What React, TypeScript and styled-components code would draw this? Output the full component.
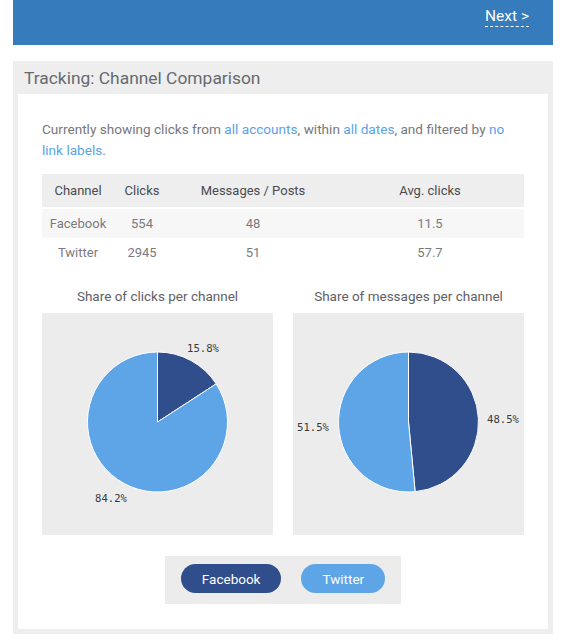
import React from "react";
import styled, { createGlobalStyle } from "styled-components";

const Global = createGlobalStyle`
  html, body { margin: 0; padding: 0; background: #ffffff; }
  body { font-family: Roboto, "Liberation Sans", sans-serif; }
`;

const Page = styled.div`
  margin: 0 12px 0 13px;
  display: flex;
  flex-direction: column;
`;

const TopBar = styled.div`
  height: 45px;
  background: #367bbb;
  display: flex;
  justify-content: flex-end;
  align-items: flex-start;
  padding: 0 24px 0 0;
  box-sizing: border-box;
`;

const NextLink = styled.a`
  margin-top: 7px;
  color: #ffffff;
  font-size: 15.5px;
  line-height: 18px;
  text-decoration: none;
  border-bottom: 1px dashed #ffffff;
  padding-bottom: 1px;
  cursor: pointer;
`;

const Panel = styled.section`
  margin-top: 16px;
  background: #eeeeee;
  padding: 0 5px 5px 5px;
  display: flex;
  flex-direction: column;
`;

const PanelTitle = styled.h2`
  margin: 0;
  height: 33px;
  display: flex;
  align-items: center;
  padding-left: 6px;
  padding-top: 1px;
  box-sizing: border-box;
  font-size: 17.4px;
  font-weight: 400;
  color: #666a70;
`;

const Card = styled.div`
  background: #ffffff;
  padding: 25px 24px 25px 24px;
  display: flex;
  flex-direction: column;
`;

const Description = styled.p`
  margin: 0;
  font-size: 13.6px;
  line-height: 21px;
  color: #77787d;
`;

const Link = styled.span`
  color: #5ba2e4;
`;

const Table = styled.div`
  margin-top: 13px;
  display: grid;
  grid-template-columns: 72px 56px 166px 1fr;
`;

const Row = styled.div<{ $head?: boolean; $shade?: boolean }>`
  display: contents;
  & > div {
    height: ${(p) => (p.$head ? "33px" : "29px")};
    background: ${(p) => (p.$head ? "#eeeeee" : p.$shade ? "#f7f7f7" : "#ffffff")};
    color: ${(p) => (p.$head ? "#4a4b50" : "#7a7b80")};
    margin-bottom: ${(p) => (p.$head ? "2px" : "0")};
  }
`;

const Cell = styled.div`
  display: flex;
  align-items: center;
  justify-content: center;
  font-size: 13px;
`;

const Charts = styled.div`
  margin-top: 21px;
  display: grid;
  grid-template-columns: 231px 231px;
  justify-content: space-between;
`;

const ChartCol = styled.div`
  display: flex;
  flex-direction: column;
  align-items: stretch;
`;

const ChartTitle = styled.div`
  text-align: center;
  font-size: 13.5px;
  line-height: 16px;
  color: #5f6066;
  margin-bottom: 9px;
`;

const ChartBox = styled.div`
  height: 222px;
  background: #ececec;
`;

const Legend = styled.div`
  margin: 21px auto 0 auto;
  background: #ececec;
  padding: 8px 16px 11px 16px;
  display: flex;
  gap: 20px;
`;

const LegendButton = styled.button<{ $color: string }>`
  height: 29px;
  border: none;
  border-radius: 15px;
  background: ${(p) => p.$color};
  color: #ffffff;
  font-family: Roboto, "Liberation Sans", sans-serif;
  font-size: 13.5px;
  padding: 0 21px;
  cursor: pointer;
`;

const DARK = "#304d8c";
const LIGHT = "#5ea5e8";

type Slice = { value: number; color: string };

function arc(cx: number, cy: number, r: number, a0: number, a1: number) {
  const p = (a: number) => [cx + r * Math.sin(a), cy - r * Math.cos(a)];
  const [x0, y0] = p(a0);
  const [x1, y1] = p(a1);
  const large = a1 - a0 > Math.PI ? 1 : 0;
  return `M${cx},${cy} L${x0},${y0} A${r},${r} 0 ${large} 1 ${x1},${y1} Z`;
}

function Pie({
  slices,
  labels,
}: {
  slices: Slice[];
  labels: { text: string; x: number; y: number }[];
}) {
  const cx = 115.5;
  const cy = 109;
  const r = 70;
  const total = slices.reduce((s, x) => s + x.value, 0);
  let a = 0;
  return (
    <svg width="231" height="222" viewBox="0 0 231 222">
      {slices.map((s, i) => {
        const a0 = a;
        a += (s.value / total) * Math.PI * 2;
        return (
          <path
            key={i}
            d={arc(cx, cy, r, a0, a)}
            fill={s.color}
            stroke="#ffffff"
            strokeWidth={1}
            strokeLinejoin="round"
          />
        );
      })}
      {labels.map((l, i) => (
        <text
          key={i}
          x={l.x}
          y={l.y}
          fontFamily='"DejaVu Sans Mono", "Liberation Mono", monospace'
          fontSize="10.6"
          fill="#3a3a3a"
        >
          {l.text}
        </text>
      ))}
    </svg>
  );
}

export default function App() {
  return (
    <>
      <Global />
      <Page>
        <TopBar>
          <NextLink>Next &gt;</NextLink>
        </TopBar>
        <Panel>
          <PanelTitle>Tracking: Channel Comparison</PanelTitle>
          <Card>
            <Description>
              Currently showing clicks from <Link>all accounts</Link>, within{" "}
              <Link>all dates</Link>, and filtered by <Link>no</Link>{" "}
              <Link>link labels</Link>.
            </Description>
            <Table>
              <Row $head>
                <Cell>Channel</Cell>
                <Cell>Clicks</Cell>
                <Cell>Messages / Posts</Cell>
                <Cell>Avg. clicks</Cell>
              </Row>
              <Row $shade>
                <Cell>Facebook</Cell>
                <Cell>554</Cell>
                <Cell>48</Cell>
                <Cell>11.5</Cell>
              </Row>
              <Row>
                <Cell>Twitter</Cell>
                <Cell>2945</Cell>
                <Cell>51</Cell>
                <Cell>57.7</Cell>
              </Row>
            </Table>
            <Charts>
              <ChartCol>
                <ChartTitle>Share of clicks per channel</ChartTitle>
                <ChartBox>
                  <Pie
                    slices={[
                      { value: 554, color: DARK },
                      { value: 2945, color: LIGHT },
                    ]}
                    labels={[
                      { text: "15.8%", x: 145, y: 39 },
                      { text: "84.2%", x: 53, y: 189 },
                    ]}
                  />
                </ChartBox>
              </ChartCol>
              <ChartCol>
                <ChartTitle>Share of messages per channel</ChartTitle>
                <ChartBox>
                  <Pie
                    slices={[
                      { value: 48, color: DARK },
                      { value: 51, color: LIGHT },
                    ]}
                    labels={[
                      { text: "48.5%", x: 194, y: 110 },
                      { text: "51.5%", x: 4, y: 118 },
                    ]}
                  />
                </ChartBox>
              </ChartCol>
            </Charts>
            <Legend>
              <LegendButton $color={DARK}>Facebook</LegendButton>
              <LegendButton $color={LIGHT}>Twitter</LegendButton>
            </Legend>
          </Card>
        </Panel>
      </Page>
    </>
  );
}
